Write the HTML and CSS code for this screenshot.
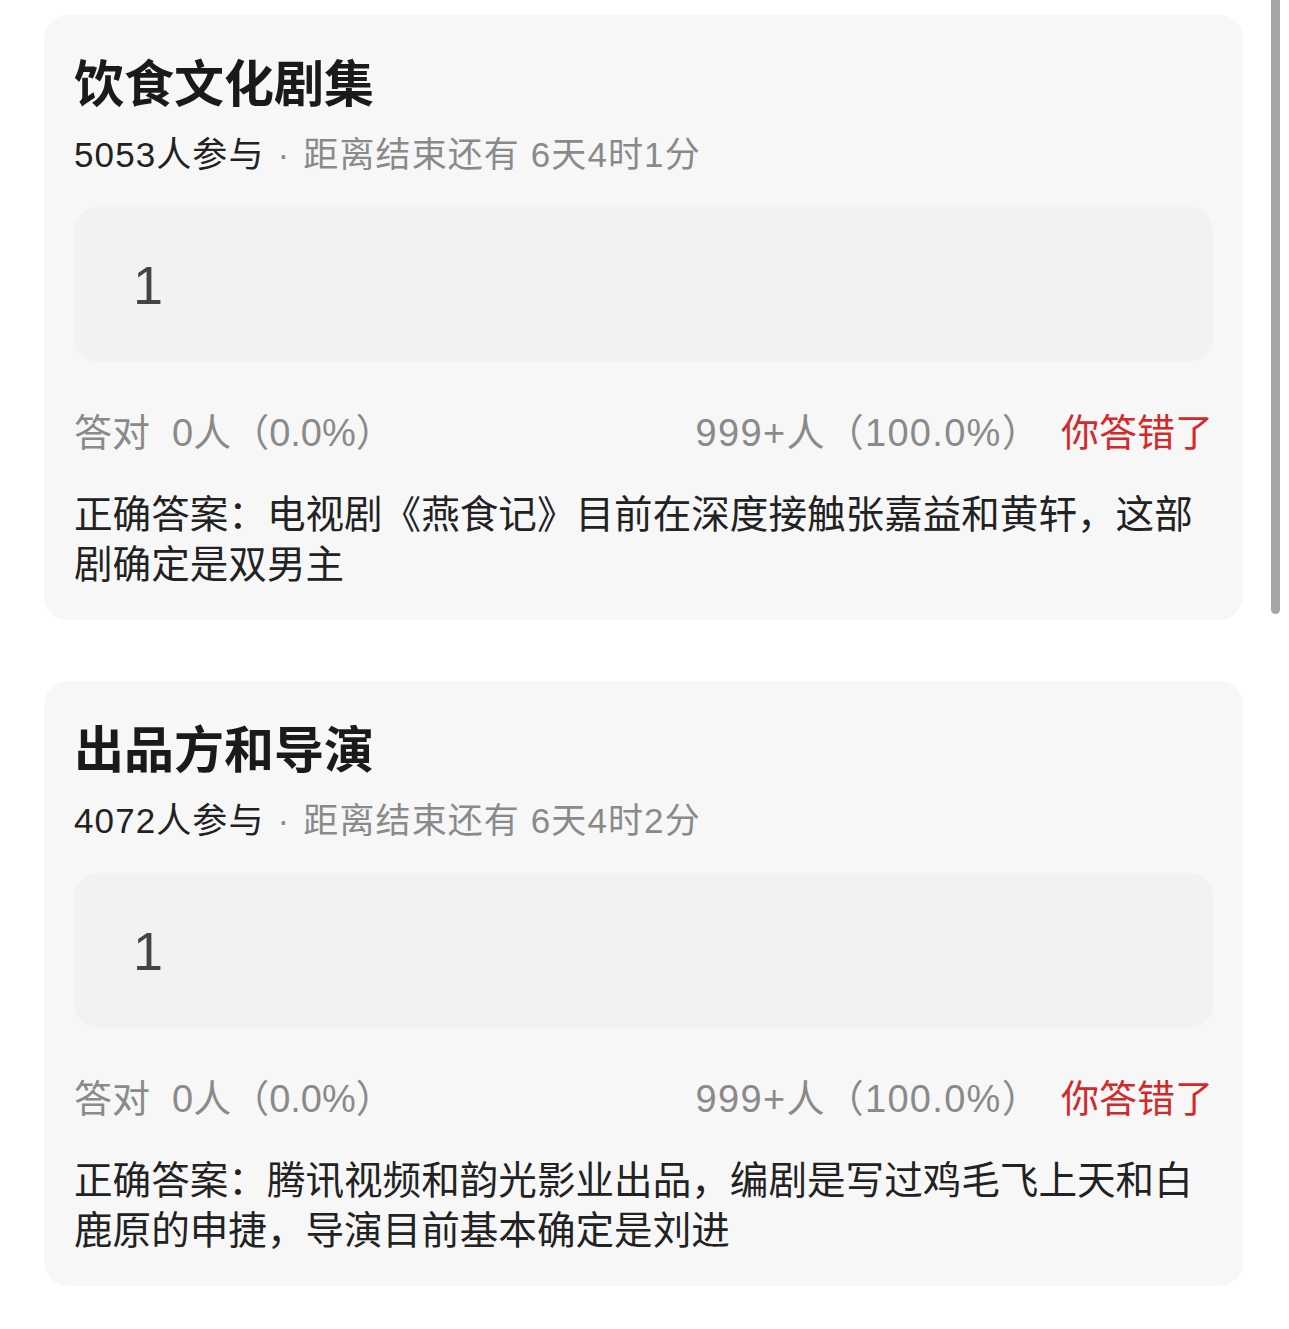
FILE: index.html
```html
<!DOCTYPE html>
<html lang="zh-CN">
<head>
<meta charset="utf-8">
<title>竞猜</title>
<link rel="stylesheet" href="styles.css">
</head>
<body>
<div class="page">
  <section class="card">
    <h2 class="title">饮食文化剧集</h2>
    <div class="meta"><span class="count">5053人参与</span><span class="dot">·</span><span class="muted">距离结束还有 6天4时1分</span></div>
    <div class="answer-box">1</div>
    <div class="stats">
      <div class="stat-left">答对<span class="gap">0人（0.0%）</span></div>
      <div class="stat-right">999+人（100.0%）<span class="wrong">你答错了</span></div>
    </div>
    <p class="solution">正确答案：电视剧《燕食记》目前在深度接触张嘉益和黄轩，这部剧确定是双男主</p>
  </section>
  <section class="card">
    <h2 class="title">出品方和导演</h2>
    <div class="meta"><span class="count">4072人参与</span><span class="dot">·</span><span class="muted">距离结束还有 6天4时2分</span></div>
    <div class="answer-box">1</div>
    <div class="stats">
      <div class="stat-left">答对<span class="gap">0人（0.0%）</span></div>
      <div class="stat-right">999+人（100.0%）<span class="wrong">你答错了</span></div>
    </div>
    <p class="solution">正确答案：腾讯视频和韵光影业出品，编剧是写过鸡毛飞上天和白鹿原的申捷，导演目前基本确定是刘进</p>
  </section>
</div>
<div class="scrollbar"></div>
</body>
</html>
```
FILE: styles.css
```css
html, body {
  margin: 0;
  padding: 0;
  background: #ffffff;
}
body {
  font-family: "Liberation Sans", "Noto Sans CJK SC", sans-serif;
  color: #222222;
  overflow: hidden;
}
.page {
  display: flex;
  flex-direction: column;
  gap: 61px;
  width: 1199px;
  padding: 15px 0 0 44px;
}
.card {
  background: #f7f7f7;
  border-radius: 24px;
  padding: 35px 30px 30px 30px;
}
.title {
  margin: 0;
  font-size: 50px;
  line-height: 60px;
  font-weight: 700;
  color: #1a1a1a;
  font-family: "Noto Sans CJK SC", sans-serif;
}
.meta {
  margin-top: 23px;
  font-size: 35px;
  line-height: 44px;
  display: flex;
  white-space: pre;
  letter-spacing: 1.1px;
}
.count {
  color: #222222;
}
.dot {
  color: #8a8a8a;
  padding: 0 13px;
}
.muted {
  color: #8a8a8a;
}
.answer-box {
  margin-top: 30px;
  height: 155px;
  background: #f2f2f2;
  border-radius: 24px;
  display: flex;
  align-items: center;
  padding-left: 59px;
  font-size: 54px;
  color: #444444;
}
.stats {
  margin-top: 46px;
  display: flex;
  justify-content: space-between;
  font-size: 38px;
  line-height: 50px;
  color: #8a8a8a;
}
.stat-right {
  letter-spacing: 1.3px;
}
.gap {
  margin-left: 22px;
}
.wrong {
  color: #d22a2a;
  margin-left: 20px;
  letter-spacing: 0;
}
.solution {
  margin: 32px 0 0 0;
  font-size: 38.6px;
  line-height: 50px;
  color: #222222;
}
.scrollbar {
  position: absolute;
  top: 0;
  left: 1271px;
  width: 9px;
  height: 614px;
  background: #a6a6a6;
  border-radius: 0 0 5px 5px;
}
```
